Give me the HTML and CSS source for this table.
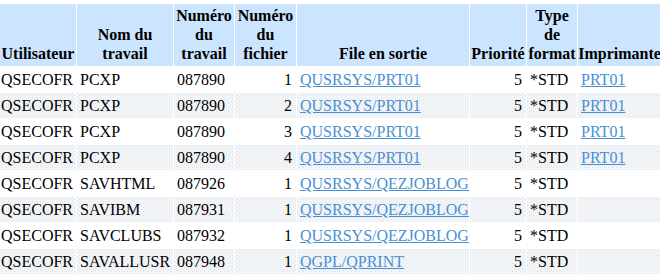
FILE: index.html
```html
<!DOCTYPE html>
<html lang="fr">
<head>
<meta charset="utf-8">
<title>Fichiers spoule</title>
<link rel="stylesheet" href="styles.css">
</head>
<body>
<table class="spool">
  <colgroup>
    <col class="c-user"><col class="c-job"><col class="c-jobnum"><col class="c-filenum">
    <col class="c-outq"><col class="c-prio"><col class="c-fmt"><col class="c-prt">
  </colgroup>
  <thead>
    <tr>
      <th>Utilisateur</th>
      <th>Nom du travail</th>
      <th>Numéro du travail</th>
      <th>Numéro du fichier</th>
      <th>File en sortie</th>
      <th>Priorité</th>
      <th>Type de format</th>
      <th>Imprimante</th>
    </tr>
  </thead>
  <tbody>
    <tr><td>QSECOFR</td><td>PCXP</td><td>087890</td><td class="num">1</td><td><a href="#">QUSRSYS/PRT01</a></td><td class="num">5</td><td>*STD</td><td><a href="#">PRT01</a></td></tr>
    <tr class="alt"><td>QSECOFR</td><td>PCXP</td><td>087890</td><td class="num">2</td><td><a href="#">QUSRSYS/PRT01</a></td><td class="num">5</td><td>*STD</td><td><a href="#">PRT01</a></td></tr>
    <tr><td>QSECOFR</td><td>PCXP</td><td>087890</td><td class="num">3</td><td><a href="#">QUSRSYS/PRT01</a></td><td class="num">5</td><td>*STD</td><td><a href="#">PRT01</a></td></tr>
    <tr class="alt"><td>QSECOFR</td><td>PCXP</td><td>087890</td><td class="num">4</td><td><a href="#">QUSRSYS/PRT01</a></td><td class="num">5</td><td>*STD</td><td><a href="#">PRT01</a></td></tr>
    <tr><td>QSECOFR</td><td>SAVHTML</td><td>087926</td><td class="num">1</td><td><a href="#">QUSRSYS/QEZJOBLOG</a></td><td class="num">5</td><td>*STD</td><td></td></tr>
    <tr class="alt"><td>QSECOFR</td><td>SAVIBM</td><td>087931</td><td class="num">1</td><td><a href="#">QUSRSYS/QEZJOBLOG</a></td><td class="num">5</td><td>*STD</td><td></td></tr>
    <tr><td>QSECOFR</td><td>SAVCLUBS</td><td>087932</td><td class="num">1</td><td><a href="#">QUSRSYS/QEZJOBLOG</a></td><td class="num">5</td><td>*STD</td><td></td></tr>
    <tr class="alt"><td>QSECOFR</td><td>SAVALLUSR</td><td>087948</td><td class="num">1</td><td><a href="#">QGPL/QPRINT</a></td><td class="num">5</td><td>*STD</td><td></td></tr>
  </tbody>
</table>
</body>
</html>
```
FILE: styles.css
```css
html, body {
  margin: 0;
  padding: 0;
  background: #ffffff;
}

body {
  font-family: "Liberation Serif", "Times New Roman", serif;
  font-size: 16px;
  color: #000000;
  overflow: hidden;
}

.spool {
  table-layout: fixed;
  border-collapse: separate;
  border-spacing: 1px;
  margin: 3px 0 0 -1px;
  width: 661px;
}

.c-user   { width: 76px; }
.c-job    { width: 96px; }
.c-jobnum { width: 60px; }
.c-filenum{ width: 61px; }
.c-outq   { width: 172px; }
.c-prio   { width: 56px; }
.c-fmt    { width: 50px; }
.c-prt    { width: 83px; }

.spool th {
  background: #cce5fe;
  font-weight: bold;
  text-align: center;
  vertical-align: bottom;
  line-height: 19px;
  height: 57px;
  padding: 2px 0 3px 0;
  overflow: visible;
}

.spool td {
  line-height: 19px;
  height: 19px;
  padding: 3px 3px;
  text-align: left;
  vertical-align: middle;
  white-space: nowrap;
  overflow: visible;
}

.spool td:first-child {
  padding-left: 1px;
}

.spool td.num {
  text-align: right;
  padding-right: 4px;
}

.spool tr.alt td {
  background-color: #f5f5f5;
  background-image:
    conic-gradient(from 0deg at 1px 1px, transparent 270deg, #cfe3f8 270deg),
    conic-gradient(from 0deg at 1px 1px, transparent 270deg, #cfe3f8 270deg);
  background-size: 4px 4px, 4px 4px;
  background-position: 0 0, 2px 2px;
}

.spool a {
  color: #4a8fd2;
  text-decoration: underline;
}
```
